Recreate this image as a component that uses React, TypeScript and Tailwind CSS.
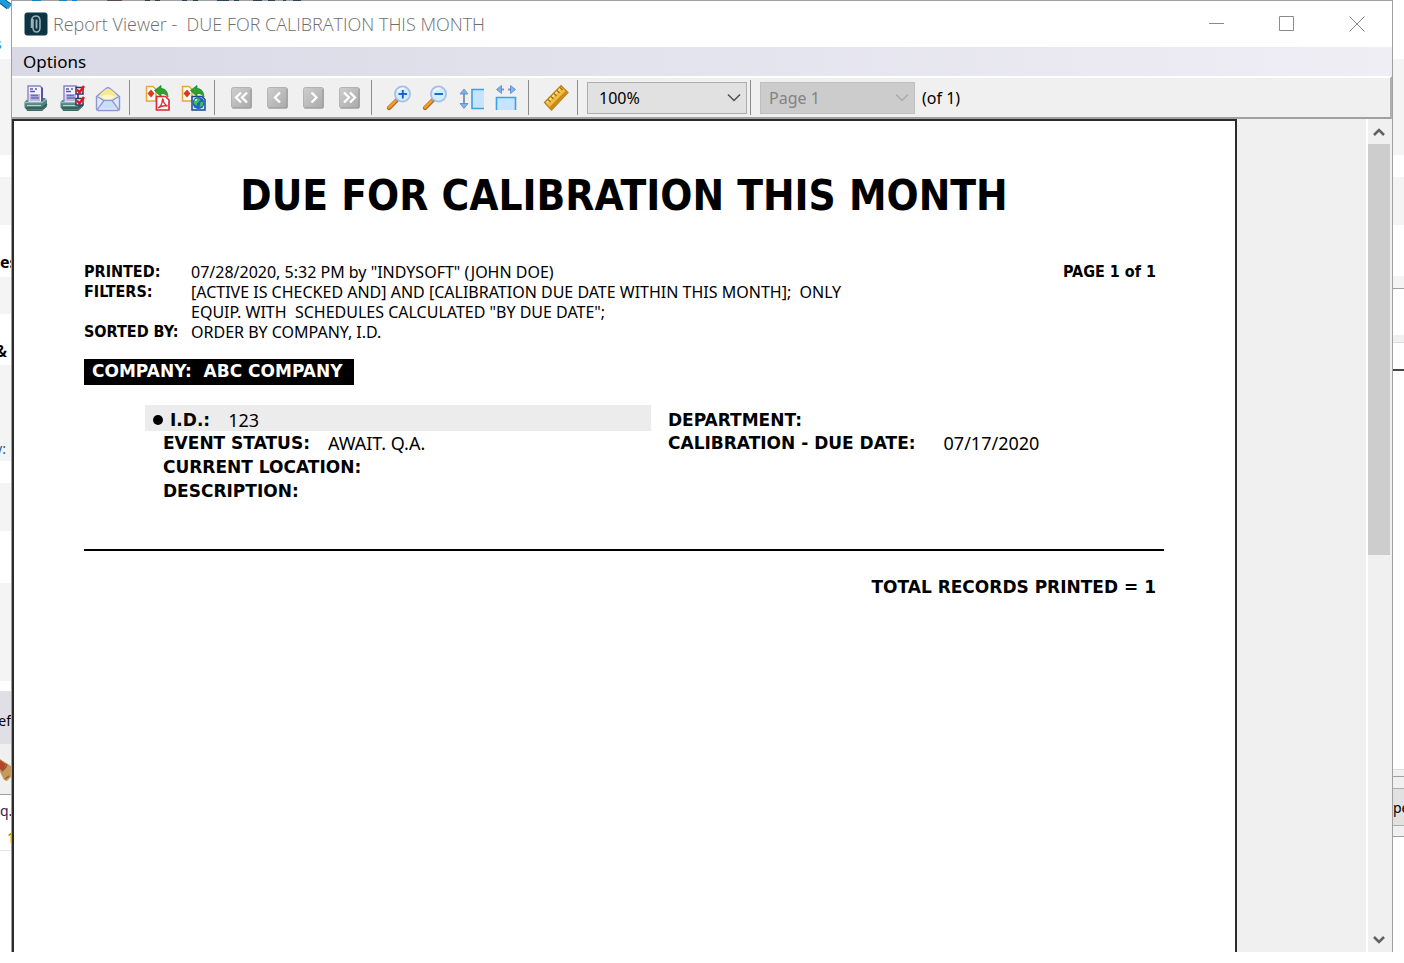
import { ReactNode, useState } from "react";

const Icon = ({ children }: { children: ReactNode }) => (
  <svg width="26" height="28" viewBox="0 0 26 28" fill="none" aria-hidden="true">
    {children}
  </svg>
);

const PrinterShape = () => (
  <>
    <path d="M5 2h12l2 2v15H5z" fill="#f3f2fc" stroke="#8583c4" strokeWidth="1.4" />
    <path d="M18 3l2 1v14h-2z" fill="#55539c" />
    <path d="M7 5h3M12 5h2M7 7.500h5" stroke="#5b59a0" strokeWidth="1.500" />
    <path d="M6.500 10h10.500v7H6.500z" fill="#b9b7e2" />
    <path d="M8 11.500h7M8 14h8" stroke="#6c6ab0" strokeWidth="1.300" />
    <path d="M4 15.500L1.500 18v5.500L4 26.500h15l5-4v-6L22 14h-2v4H5z" fill="#4f817c" />
    <path d="M2 18.500h17l4.500-3.500" stroke="#8fbab3" strokeWidth="1.400" />
    <path d="M4 21.500h14" stroke="#b4d4cd" strokeWidth="1.200" />
    <path d="M3 24h16l5-4" stroke="#2d5955" strokeWidth="1.500" />
    <path d="M4 26.500h15l4.500-4" stroke="#3d6b66" strokeWidth="1" />
  </>
);

const PrinterIcon = () => (
  <Icon>
    <PrinterShape />
  </Icon>
);

const PrinterSetupIcon = () => (
  <Icon>
    <PrinterShape />
    <path d="M17 3.500h7v6.500h-7zM17 14.500h7V21h-7z" fill="#fff" stroke="#2d3565" strokeWidth="1.500" />
    <path d="M18 5.500l2.500 3L25 2M18 16.500l2.500 3L25 13" stroke="#ee1018" strokeWidth="2.400" />
  </Icon>
);

const MailIcon = () => (
  <Icon>
    <path d="M1.500 12.500L11 4.500q2-1.500 4 0l9.500 8v12q0 2-2 2h-19q-2 0-2-2z" fill="#dfeafd" stroke="#8e97cf" strokeWidth="1.400" />
    <path d="M4 12q4-6 9-7.500 5 1.500 9 7.500l-5 3.500H9z" fill="#f7e98c" />
    <path d="M6 12.500q7-4 14 0l-4 3H10z" fill="#fdf7cf" />
    <path d="M2 12.500l7 4h8l7-4M9 16.500L2.500 25.500M17 16.500l6.500 9" stroke="#8e97cf" strokeWidth="1.300" />
    <path d="M3.500 24.500L10 18h6l6.500 6.500z" fill="#c9dcfa" />
  </Icon>
);

const ExportShape = () => (
  <>
    <path d="M2.500 2.500H9l3 3V17H2.500z" fill="#fffdf2" stroke="#e5a63c" strokeWidth="1.500" />
    <path d="M7 5.500L10.500 9.500 7 13.500 3.500 9.500z" fill="#d93a22" />
    <path d="M10.500 6.500L17 1.500v3Q23.500 4.500 24 13q-2-4-7-3.500V12.500z" fill="#2ba32c" stroke="#167b1c" strokeWidth="0.700" />
  </>
);

const ExportPdfIcon = () => (
  <Icon>
    <ExportShape />
    <path d="M12.500 12.500h9l3.500 3.500v10H12.500z" fill="#fff" stroke="#dc2b32" strokeWidth="1.700" />
    <path d="M14 24q4-2 4.500-8.500 0-1 .6 0Q19.500 20 23.500 22q-5-1-9.500 2z" stroke="#dc2b32" strokeWidth="1.300" />
  </Icon>
);

const ExportWebIcon = () => (
  <Icon>
    <ExportShape />
    <path d="M12 12.500h10l3 3v10.500H12z" fill="#d5e8fb" stroke="#1b4a8c" strokeWidth="1.500" />
    <circle cx="18.500" cy="19" r="6" fill="#1e62c8" />
    <path d="M14.500 15.500l4-1.500 2 2-3 3-1 3-3-3zM20.500 18l3 0-1 4-3 1z" fill="#3fbf54" />
    <path d="M15 16.500l2-1" stroke="#bff0ff" strokeWidth="1.500" />
  </Icon>
);

const NavIcon = ({ d }: { d: string }) => (
  <Icon>
    <defs>
      <linearGradient id="navFill" x1="0" y1="0" x2="1" y2="1">
        <stop offset="0" stopColor="#cfcfcf" />
        <stop offset="1" stopColor="#a9a9a9" />
      </linearGradient>
    </defs>
    <rect x="2.500" y="3.500" width="20" height="20.500" rx="2" fill="url(#navFill)" stroke="#b4b4b4" />
    <path d="M3.500 24H22V5" stroke="#979797" strokeWidth="1" />
    <path d={d} stroke="#fff" strokeWidth="2.300" />
  </Icon>
);

const ZoomIcon = ({ plus = false }: { plus?: boolean }) => (
  <Icon>
    <path d="M3 24l8-8" stroke="#a3652a" strokeWidth="4.200" strokeLinecap="round" />
    <path d="M3 23.500l8-8" stroke="#f59a23" strokeWidth="2.600" strokeLinecap="round" />
    <path d="M10 16.500l2-2" stroke="#7c86a8" strokeWidth="2" />
    <circle cx="16.500" cy="10" r="7.600" fill="#cdeefb" stroke="#a9bde4" strokeWidth="1.700" />
    <path d="M11.500 8q2-4 7-3.500" stroke="#f2fcff" strokeWidth="1.500" />
    <path d="M12.500 10h8.500" stroke="#1b5fc4" strokeWidth="1.900" />
    {plus && <path d="M16.800 6v8.500" stroke="#1b5fc4" strokeWidth="1.900" />}
  </Icon>
);

const FitHeightIcon = () => (
  <Icon>
    <path d="M6 9v11" stroke="#8a96ac" strokeWidth="2" />
    <path d="M6 5l4 5H2zM6 24.500L10 19.500H2z" fill="#7fb2f3" stroke="#5588cc" strokeWidth="0.800" />
    <path d="M14 5.500h12v19H14z" fill="#c6e4ff" />
    <path d="M26 5.500H14v19h12" stroke="#3d9fe8" strokeWidth="1.600" />
  </Icon>
);

const FitWidthIcon = () => (
  <Icon>
    <path d="M7 5.500h3M14 5.500h3" stroke="#8a96ac" strokeWidth="2" />
    <path d="M2.500 5.500L7.500 1.500v8zM21.500 5.500L16.500 1.500v8z" fill="#7fb2f3" stroke="#5588cc" strokeWidth="0.800" />
    <path d="M3 14h18v12H3z" fill="#c6e4ff" />
    <path d="M2.500 26V13.500h19V26" stroke="#3d9fe8" strokeWidth="1.600" />
  </Icon>
);

const RulerIcon = () => (
  <Icon>
    <path d="M1.500 18.500L18 1.500l7 7L8.500 26z" fill="#f2bd3e" stroke="#b97f16" strokeWidth="1.200" />
    <path d="M8.500 26L25 8.500l-2-2L6 23.500z" fill="#c98b1d" />
    <path d="M4 18.500L18 4" stroke="#fbe08c" strokeWidth="1.500" />
    <path d="M5 15.500l2.500 2.500M8 12.500l2.500 2.500M11 9.500l2.500 2.500M14 6.500l2.500 2.500M17 3.500l2.500 2.500" stroke="#a06a10" strokeWidth="1.200" />
  </Icon>
);

const AppIcon = () => (
  <svg width="24" height="24" viewBox="0 0 24 24" fill="none" aria-hidden="true">
    <rect x="0.500" y="0.500" width="23" height="23" rx="3" fill="#0c3443" />
    <path d="M9 7v9q.3 4 3.500 4t3.500-4V8q-.5-4-4-4T7.500 8v8" stroke="#9fb1b6" strokeWidth="1.500" />
    <path d="M12.500 7.500v9" stroke="#9fb1b6" strokeWidth="1.800" />
  </svg>
);

const Chevron = ({ color }: { color: string }) => (
  <svg
    className="pointer-events-none absolute top-1/2 right-[6px] -translate-y-1/2"
    width="14"
    height="10"
    viewBox="0 0 14 10"
    fill="none"
  >
    <path d="M1 1.500l6 6 6-6" stroke={color} strokeWidth="1.500" />
  </svg>
);

const Separator = () => <div className="mr-[9px] ml-[3px] h-[35px] w-px bg-[#8c8c8c]" />;

const ToolButton = ({ label, disabled, children }: { label: string; disabled?: boolean; children: ReactNode }) => (
  <button type="button" title={label} aria-label={label} disabled={disabled} className="flex h-9 w-9 items-center justify-center">
    {children}
  </button>
);

const TitleBar = () => (
  <header className="flex h-[46px] items-center bg-white pl-3">
    <AppIcon />
    <h1 className="ml-[5px] flex-1 font-['Open_Sans','Noto_Sans',sans-serif] text-[18px] font-light whitespace-pre text-[#6f6f6f]">
      {"Report Viewer -  DUE FOR CALIBRATION THIS MONTH"}
    </h1>
    <button type="button" aria-label="Minimize" className="flex h-full w-[70px] items-center justify-center">
      <svg width="16" height="16" stroke="#8a8a8a"><path d="M0 7.500h15" /></svg>
    </button>
    <button type="button" aria-label="Maximize" className="flex h-full w-[70px] items-center justify-center">
      <svg width="16" height="16" fill="none" stroke="#8a8a8a"><path d="M.5.500h14v14H.5z" /></svg>
    </button>
    <button type="button" aria-label="Close" className="flex h-full w-[70px] items-center justify-center">
      <svg width="16" height="16" stroke="#8a8a8a"><path d="M.5.500l15 15M15.500.500l-15 15" /></svg>
    </button>
  </header>
);

const Toolbar = () => {
  const [zoom, setZoom] = useState("100%");

  return (
    <div className="flex h-[43px] items-center border-t-2 border-r-2 border-b-2 border-t-white border-r-[#b0b0b0] border-b-[#a0a0a0] bg-[#f0f0f0] pl-[6px]">
      <ToolButton label="Print"><PrinterIcon /></ToolButton>
      <ToolButton label="Print setup"><PrinterSetupIcon /></ToolButton>
      <ToolButton label="Send by mail"><MailIcon /></ToolButton>
      <Separator />
      <ToolButton label="Export to PDF"><ExportPdfIcon /></ToolButton>
      <ToolButton label="Export to web"><ExportWebIcon /></ToolButton>
      <Separator />
      <ToolButton label="First page" disabled><NavIcon d="M12 8.500L7 13.500l5 5M18 8.500l-5 5 5 5" /></ToolButton>
      <ToolButton label="Previous page" disabled><NavIcon d="M15 8.500l-5 5 5 5" /></ToolButton>
      <ToolButton label="Next page" disabled><NavIcon d="M10.500 8.500l5 5-5 5" /></ToolButton>
      <ToolButton label="Last page" disabled><NavIcon d="M7 8.500l5 5-5 5M13 8.500l5 5-5 5" /></ToolButton>
      <Separator />
      <ToolButton label="Zoom in"><ZoomIcon plus /></ToolButton>
      <ToolButton label="Zoom out"><ZoomIcon /></ToolButton>
      <ToolButton label="Fit height"><FitHeightIcon /></ToolButton>
      <ToolButton label="Fit width"><FitWidthIcon /></ToolButton>
      <Separator />
      <ToolButton label="Ruler"><RulerIcon /></ToolButton>
      <Separator />
      <div className="relative">
        <select
          aria-label="Zoom"
          value={zoom}
          onChange={(e) => setZoom(e.target.value)}
          className="block h-8 w-40 appearance-none border border-[#adadad] bg-[#e1e1e1] pl-[11px] text-[16px] text-black"
        >
          <option>100%</option>
          <option>150%</option>
          <option>200%</option>
        </select>
        <Chevron color="#505050" />
      </div>
      <Separator />
      <div className="relative">
        <select
          aria-label="Page"
          disabled
          className="block h-8 w-[155px] appearance-none border border-[#bfbfbf] bg-[#cccccc] pl-2 text-[16px] text-[#838383] opacity-100"
        >
          <option>Page 1</option>
        </select>
        <Chevron color="#aaaaaa" />
      </div>
      <span className="ml-[7px] text-[16px] text-black">(of 1)</span>
    </div>
  );
};

const Label = ({ children }: { children: ReactNode }) => (
  <dt className="font-['DejaVu_Sans',sans-serif] text-[17px] font-bold whitespace-nowrap">{children}</dt>
);

const HeaderLabel = ({ children }: { children: ReactNode }) => (
  <dt className="font-['DejaVu_Sans_Condensed','DejaVu_Sans',sans-serif] font-bold whitespace-nowrap">{children}</dt>
);

const Field = ({ label, value }: { label: string; value?: string }) => (
  <div className="flex h-6 items-center gap-[18px] pl-[18px]">
    <Label>{label}</Label>
    <dd>{value}</dd>
  </div>
);

const ReportPage = () => (
  <article className="flex-1 border-2 border-b-0 border-[#2b2b2b] bg-white pr-[71px] pl-[70px] font-['Noto_Sans',sans-serif] text-black">
    <h2 className="mt-[50px] text-center font-['DejaVu_Sans_Condensed','DejaVu_Sans',sans-serif] text-[42px] leading-[50px] font-bold">
      DUE FOR CALIBRATION THIS MONTH
    </h2>

    <div className="mt-[41px] flex justify-between pr-2 text-[16px] leading-5">
      <dl className="grid grid-cols-[107px_1fr]">
        <HeaderLabel>PRINTED:</HeaderLabel>
        <dd>07/28/2020, 5:32 PM by "INDYSOFT" (JOHN DOE)</dd>
        <HeaderLabel>FILTERS:</HeaderLabel>
        <dd className="whitespace-pre">
          {"[ACTIVE IS CHECKED AND] AND [CALIBRATION DUE DATE WITHIN THIS MONTH];  ONLY\nEQUIP. WITH  SCHEDULES CALCULATED \"BY DUE DATE\";"}
        </dd>
        <HeaderLabel>SORTED BY:</HeaderLabel>
        <dd>ORDER BY COMPANY, I.D.</dd>
      </dl>
      <p className="font-['DejaVu_Sans_Condensed','DejaVu_Sans',sans-serif] font-bold">PAGE 1 of 1</p>
    </div>

    <h3 className="mt-[17px] flex h-[26px] w-[270px] items-center bg-black pl-2 font-['DejaVu_Sans',sans-serif] text-[17px] font-bold whitespace-pre text-white">
      {"COMPANY:  ABC COMPANY"}
    </h3>

    <div className="mt-5 flex gap-[17px] pl-[61px] text-[18px] leading-6">
      <dl className="w-[506px]">
        <div className="flex h-[26px] items-center bg-[#ececec] pt-1 pl-2">
          <span className="mr-[7px] h-[10px] w-[10px] rounded-full bg-black" />
          <Label>I.D.:</Label>
          <dd className="ml-[18px]">123</dd>
        </div>
        <Field label="EVENT STATUS:" value="AWAIT. Q.A." />
        <Field label="CURRENT LOCATION:" />
        <Field label="DESCRIPTION:" />
      </dl>
      <dl>
        <div className="flex h-[26px] items-center pt-1">
          <Label>DEPARTMENT:</Label>
          <dd />
        </div>
        <div className="flex h-6 items-center gap-7">
          <Label>CALIBRATION - DUE DATE:</Label>
          <dd>07/17/2020</dd>
        </div>
      </dl>
    </div>

    <hr className="mt-[46px] border-t-2 border-black" />
    <p className="mt-6 pr-2 text-right font-['DejaVu_Sans',sans-serif] text-[17px] leading-6 font-bold">TOTAL RECORDS PRINTED = 1</p>
  </article>
);

const ScrollBar = () => (
  <div className="flex w-[26px] flex-col border-l-2 border-white bg-[#f0f0f0] pr-[2px]">
    <button type="button" aria-label="Scroll up" className="flex h-[25px] items-center justify-center">
      <svg width="12" height="10" fill="none" stroke="#606060" strokeWidth="2.500"><path d="M1 8l5-5 5 5" /></svg>
    </button>
    <div className="flex-1">
      <div className="h-[52.500%] bg-[#cdcdcd]" />
    </div>
    <button type="button" aria-label="Scroll down" className="flex h-[25px] items-center justify-center">
      <svg width="12" height="10" fill="none" stroke="#606060" strokeWidth="2.500"><path d="M1 2l5 5 5-5" /></svg>
    </button>
  </div>
);

// slivers of the main application that stay visible around the viewer
const TopEdge = () => (
  <svg className="absolute -top-px left-0" width="310" height="1" aria-hidden="true">
    <path d="M20 0h9v1h-9zM47 0h8v1h-8zM60 0h5v1h-5z" fill="#1584bd" />
    <path d="M95 0h15v1H95z" fill="#5a4a4a" />
    <path d="M133 0h5v1h-5zM143 0h5v1h-5zM170 0h5v1h-5zM181 0h5v1h-5zM205 0h12v1h-12zM222 0h5v1h-5zM241 0h9v1h-9zM256 0h7v1h-7zM271 0h3v1h-3zM281 0h8v1h-8z" fill="#2b4552" />
  </svg>
);

const LeftEdge = () => (
  <div className="flex w-[11px] flex-col overflow-hidden text-[14px] leading-4 whitespace-nowrap">
    <svg className="shrink-0" width="11" height="36" fill="none">
      <path d="M-2-2L9 6.500" stroke="#15557e" strokeWidth="7" />
      <path d="M-2-2L10 7" stroke="#1b9be0" strokeWidth="5" />
    </svg>
    <div className="flex h-[23px] shrink-0 items-start justify-start"><span className="-ml-[5px] text-[#1b8fd8]">s</span></div>
    <div className="h-24 shrink-0 bg-[#f4f4f4]" />
    <div className="h-[22px] shrink-0" />
    <div className="h-12 shrink-0 bg-[#f4f4f4]" />
    <div className="flex h-[52px] shrink-0 items-center pt-[22px] text-[16px] font-bold">es</div>
    <div className="h-[37px] shrink-0 bg-[#f4f4f4]" />
    <div className="flex h-[51px] shrink-0 items-center justify-end pt-[22px] pr-1 text-[16px] font-bold">&amp;</div>
    <div className="flex h-24 shrink-0 items-end justify-end bg-[#f4f4f4] pr-[5px] pb-1 text-[#2a5b95]">y:</div>
    <div className="h-[22px] shrink-0" />
    <div className="h-12 shrink-0 bg-[#f4f4f4]" />
    <div className="h-[52px] shrink-0" />
    <div className="h-[98px] shrink-0 bg-[#f4f4f4]" />
    <div className="h-[10px] shrink-0" />
    <div className="flex h-[53px] shrink-0 items-center justify-end bg-[#e0dfe6] pt-[6px]">ef</div>
    <div className="h-[51px] shrink-0 border-b border-[#9a9fa6] bg-[#f0f0f0] pt-[14px]">
      <svg width="11" height="26">
        <path d="M0 1l3 2 8 5v11l-4 4-3-1-4-8z" fill="#c8995c" />
        <path d="M0 2l6 4-3 8-3-3z" fill="#b5482b" />
        <path d="M2 12q4-1 5-6M5 21l4-3" stroke="#8a5c2c" strokeWidth="1.300" fill="none" />
      </svg>
    </div>
    <div className="flex h-[56px] shrink-0 flex-col gap-[11px] border-b border-[#e4e4e4] pt-2">
      <span className="text-[#35204f]">q.</span>
      <span className="pl-[7px] text-[#8a7800]">1</span>
    </div>
  </div>
);

const RightEdge = () => (
  <div className="flex w-[11px] flex-col overflow-hidden text-[14px] whitespace-nowrap">
    <div className="h-[59px] shrink-0" />
    <div className="h-24 shrink-0 bg-[#f4f4f4]" />
    <div className="h-[22px] shrink-0" />
    <div className="h-12 shrink-0 bg-[#f4f4f4]" />
    <div className="h-[51px] shrink-0" />
    <div className="h-[13px] shrink-0 border-b border-[#a0a0a0] bg-[#f4f4f4]" />
    <div className="h-[46px] shrink-0" />
    <div className="h-2 shrink-0 border-b border-[#dcdcdc] bg-[#f0f0f0]" />
    <div className="h-[28px] shrink-0 border-b-2 border-[#444]" />
    <div className="h-[398px] shrink-0" />
    <div className="h-2 shrink-0 border-t border-b border-t-[#dcdcdc] border-b-[#a0a0a0] bg-[#f0f0f0]" />
    <div className="h-[11px] shrink-0 bg-[#f0f0f0]" />
    <div className="flex h-[38px] shrink-0 items-center border-y border-[#adadad] bg-[#e1e1e1]">pe</div>
    <div className="h-[11px] shrink-0 border-b border-[#a0a0a0] bg-[#f0f0f0]" />
  </div>
);

const App = () => (
  <div className="flex h-screen overflow-hidden bg-white font-['Noto_Sans',sans-serif]">
    <LeftEdge />
    <main className="relative mb-[11px] flex min-w-0 flex-1 flex-col border-x border-t border-[#a0a0a0]">
      <TopEdge />
      <TitleBar />
      <nav className="flex h-[29px] items-center bg-linear-to-r from-[#d9d9e6] to-[#efeef5] pl-[11px]">
        <button type="button" className="text-[17px] text-black">Options</button>
      </nav>
      <Toolbar />
      <div className="flex min-h-0 flex-1 bg-[#f0f0f0]">
        <ReportPage />
        <div className="w-[129px]" />
        <ScrollBar />
      </div>
    </main>
    <RightEdge />
  </div>
);

export default App;
